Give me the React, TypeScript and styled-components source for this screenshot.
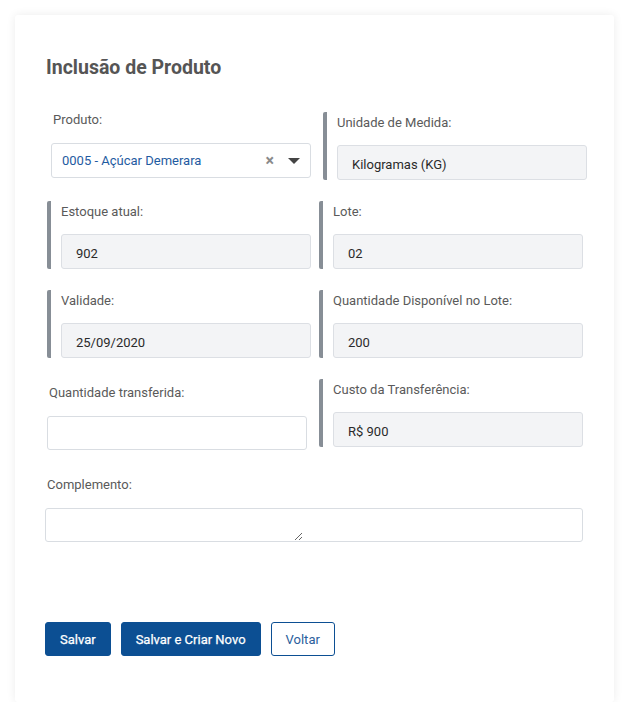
import React from "react";
import styled, { createGlobalStyle } from "styled-components";

const GlobalStyle = createGlobalStyle`
  body {
    margin: 0;
    background: #ffffff;
    font-family: Roboto, "Liberation Sans", Arial, sans-serif;
  }
`;

const Card = styled.div`
  margin: 15px 0 0 15px;
  width: 599px;
  height: 687px;
  box-sizing: border-box;
  background: #fff;
  border-radius: 3px;
  box-shadow: 0 0 10px rgba(0, 0, 0, 0.08);
  padding: 41px 31px 0 32px;
`;

const Title = styled.h1`
  margin: 0 0 32px -1px;
  font-size: 19.5px;
  line-height: 24px;
  font-weight: 700;
  color: #555;
`;

const Form = styled.div`
  display: flex;
  flex-direction: column;
  gap: 21px;
`;

const Row = styled.div<{ $shift?: number }>`
  display: grid;
  grid-template-columns: 264px 264px;
  column-gap: 8px;
  height: 68px;
  margin-left: ${(p) => p.$shift ?? 0}px;
`;

const BarField = styled.div`
  height: 68px;
  box-sizing: border-box;
  border-left: 4px solid #878e96;
  border-radius: 2px;
  padding-left: 10px;
`;

const PlainField = styled.div<{ $dy: number }>`
  margin-top: ${(p) => p.$dy}px;
`;

const Label = styled.label<{ $indent?: number }>`
  display: block;
  font-size: 13px;
  line-height: 21px;
  color: #5a5a5a;
  margin-bottom: ${(p) => (p.$indent ? 13 : 12)}px;
  padding-left: ${(p) => p.$indent ?? 0}px;
`;

const ReadOnlyInput = styled.input`
  display: block;
  width: 250px;
  height: 35px;
  box-sizing: border-box;
  border: 1px solid #dcdfe4;
  border-radius: 3px;
  background: #f3f4f6;
  padding: 4px 14px 0;
  font-family: Roboto, "Liberation Sans", Arial, sans-serif;
  font-size: 13px;
  font-weight: 400;
  color: #2a2a2a;
  outline: none;
`;

const TextInput = styled.input`
  display: block;
  width: 260px;
  height: 34px;
  box-sizing: border-box;
  border: 1px solid #d9dde2;
  border-radius: 3px;
  background: #fff;
  padding: 0 10px;
  font-family: Roboto, "Liberation Sans", Arial, sans-serif;
  font-size: 13px;
  outline: none;
`;

const Select = styled.div`
  display: flex;
  align-items: center;
  width: 260px;
  height: 35px;
  box-sizing: border-box;
  border: 1px solid #d9dde2;
  border-radius: 3px;
  background: #fff;
  padding: 0 10px 0 10px;
`;

const SelectValue = styled.span`
  flex: 1;
  font-size: 13px;
  color: #1f5ba1;
`;

const ClearIcon = styled.span`
  font-size: 16px;
  line-height: 1;
  color: #8a8a8a;
  font-weight: 700;
  margin-right: 14px;
`;

const Arrow = styled.span`
  width: 0;
  height: 0;
  border-left: 6px solid transparent;
  border-right: 6px solid transparent;
  border-top: 6px solid #444;
`;

const Block = styled.div`
  margin-top: 6px;
`;

const PlainLabel = styled.label`
  display: block;
  font-size: 13px;
  line-height: 21px;
  color: #5a5a5a;
  margin-bottom: 13px;
`;

const TextAreaBox = styled.div`
  margin-left: -2px;
  width: 538px;
  height: 34px;
  box-sizing: border-box;
  border: 1px solid #d9dde2;
  border-radius: 3px;
  background: #fff;
`;

const TextArea = styled.textarea`
  display: block;
  width: 257px;
  height: 32px;
  box-sizing: border-box;
  border: none;
  outline: none;
  background: transparent;
  font-family: Roboto, "Liberation Sans", Arial, sans-serif;
  font-size: 13px;
  padding: 6px 10px;
`;

const Actions = styled.div`
  display: flex;
  gap: 10px;
  margin: 80px 0 0 -2px;
`;

const Button = styled.button<{ $outline?: boolean }>`
  height: 34px;
  box-sizing: border-box;
  padding: 0 14px;
  border-radius: 3px;
  border: 1px solid #0c4f93;
  background: ${(p) => (p.$outline ? "#fff" : "#0c4f93")};
  color: ${(p) => (p.$outline ? "#2b5e9c" : "#fff")};
  font-family: Roboto, "Liberation Sans", Arial, sans-serif;
  font-size: 13px;
  font-weight: 400;
  -webkit-text-stroke: ${(p) => (p.$outline ? "0" : "0.25px #fff")};
  cursor: pointer;
`;

export default function App() {
  return (
    <>
      <GlobalStyle />
      <Card>
        <Title>Inclusão de Produto</Title>
        <Form>
          <Row $shift={4}>
            <PlainField $dy={-3}>
              <Label $indent={2}>Produto:</Label>
              <Select>
                <SelectValue>0005 - Açúcar Demerara</SelectValue>
                <ClearIcon>×</ClearIcon>
                <Arrow />
              </Select>
            </PlainField>
            <BarField>
              <Label>Unidade de Medida:</Label>
              <ReadOnlyInput readOnly value="Kilogramas (KG)" />
            </BarField>
          </Row>
          <Row>
            <BarField>
              <Label>Estoque atual:</Label>
              <ReadOnlyInput readOnly value="902" />
            </BarField>
            <BarField>
              <Label>Lote:</Label>
              <ReadOnlyInput readOnly value="02" />
            </BarField>
          </Row>
          <Row>
            <BarField>
              <Label>Validade:</Label>
              <ReadOnlyInput readOnly value="25/09/2020" />
            </BarField>
            <BarField>
              <Label>Quantidade Disponível no Lote:</Label>
              <ReadOnlyInput readOnly value="200" />
            </BarField>
          </Row>
          <Row>
            <PlainField $dy={3}>
              <Label $indent={2}>Quantidade transferida:</Label>
              <TextInput />
            </PlainField>
            <BarField>
              <Label>Custo da Transferência:</Label>
              <ReadOnlyInput readOnly value="R$ 900" />
            </BarField>
          </Row>
          <Block>
            <PlainLabel>Complemento:</PlainLabel>
            <TextAreaBox>
              <TextArea />
            </TextAreaBox>
          </Block>
        </Form>
        <Actions>
          <Button>Salvar</Button>
          <Button>Salvar e Criar Novo</Button>
          <Button $outline>Voltar</Button>
        </Actions>
      </Card>
    </>
  );
}
